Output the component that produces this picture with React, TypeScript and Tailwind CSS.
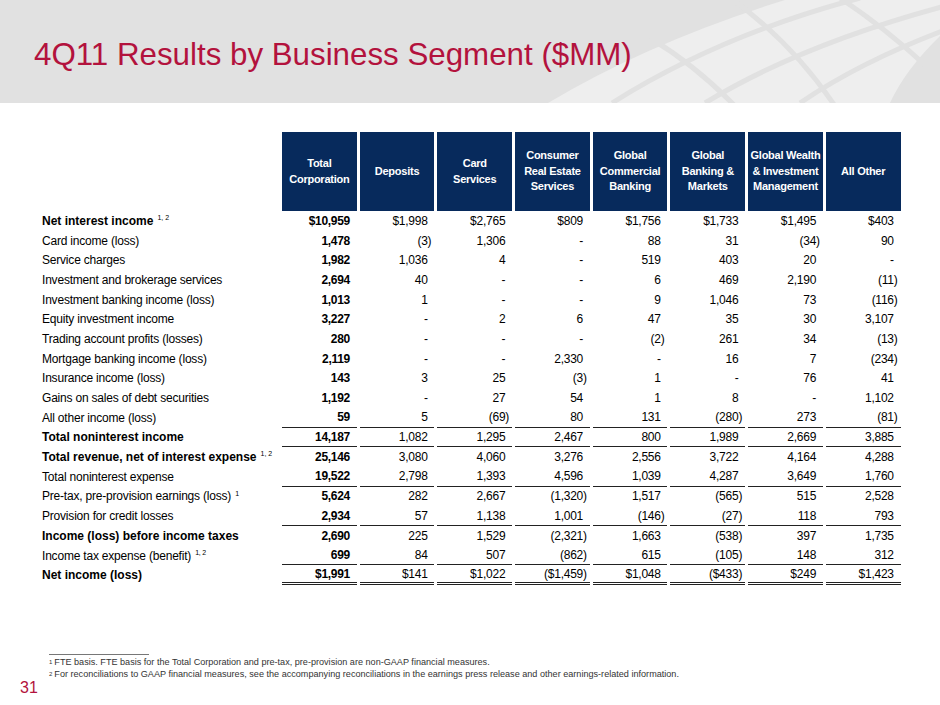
const columns = [
  ['Total', 'Corporation'],
  ['Deposits'],
  ['Card', 'Services'],
  ['Consumer', 'Real Estate', 'Services'],
  ['Global', 'Commercial', 'Banking'],
  ['Global', 'Banking &', 'Markets'],
  ['Global Wealth', '& Investment', 'Management'],
  ['All Other'],
];

type Row = {
  label: string;
  sup?: string;
  bold?: boolean;
  line?: 'single' | 'double';
  vals: string[];
};

const rows: Row[] = [
  { label: 'Net interest income', sup: '1, 2', bold: true, vals: ['$10,959', '$1,998', '$2,765', '$809', '$1,756', '$1,733', '$1,495', '$403'] },
  { label: 'Card income (loss)', vals: ['1,478', '(3)', '1,306', '-', '88', '31', '(34)', '90'] },
  { label: 'Service charges', vals: ['1,982', '1,036', '4', '-', '519', '403', '20', '-'] },
  { label: 'Investment and brokerage services', vals: ['2,694', '40', '-', '-', '6', '469', '2,190', '(11)'] },
  { label: 'Investment banking income (loss)', vals: ['1,013', '1', '-', '-', '9', '1,046', '73', '(116)'] },
  { label: 'Equity investment income', vals: ['3,227', '-', '2', '6', '47', '35', '30', '3,107'] },
  { label: 'Trading account profits (losses)', vals: ['280', '-', '-', '-', '(2)', '261', '34', '(13)'] },
  { label: 'Mortgage banking income (loss)', vals: ['2,119', '-', '-', '2,330', '-', '16', '7', '(234)'] },
  { label: 'Insurance income (loss)', vals: ['143', '3', '25', '(3)', '1', '-', '76', '41'] },
  { label: 'Gains on sales of debt securities', vals: ['1,192', '-', '27', '54', '1', '8', '-', '1,102'] },
  { label: 'All other income (loss)', line: 'single', vals: ['59', '5', '(69)', '80', '131', '(280)', '273', '(81)'] },
  { label: 'Total noninterest income', bold: true, line: 'single', vals: ['14,187', '1,082', '1,295', '2,467', '800', '1,989', '2,669', '3,885'] },
  { label: 'Total revenue, net of interest expense', sup: '1, 2', bold: true, vals: ['25,146', '3,080', '4,060', '3,276', '2,556', '3,722', '4,164', '4,288'] },
  { label: 'Total noninterest expense', line: 'single', vals: ['19,522', '2,798', '1,393', '4,596', '1,039', '4,287', '3,649', '1,760'] },
  { label: 'Pre-tax, pre-provision earnings (loss)', sup: '1', vals: ['5,624', '282', '2,667', '(1,320)', '1,517', '(565)', '515', '2,528'] },
  { label: 'Provision for credit losses', line: 'single', vals: ['2,934', '57', '1,138', '1,001', '(146)', '(27)', '118', '793'] },
  { label: 'Income (loss) before income taxes', bold: true, vals: ['2,690', '225', '1,529', '(2,321)', '1,663', '(538)', '397', '1,735'] },
  { label: 'Income tax expense (benefit)', sup: '1, 2', line: 'single', vals: ['699', '84', '507', '(862)', '615', '(105)', '148', '312'] },
  { label: 'Net income (loss)', bold: true, line: 'double', vals: ['$1,991', '$141', '$1,022', '($1,459)', '$1,048', '($433)', '$249', '$1,423'] },
];

function HeaderArcs() {
  return (
    <svg className="absolute inset-0" width="940" height="103" viewBox="0 0 940 103">
      <path d="M548 103 Q650 42 785 0 L940 0 L940 36 Q905 70 890 103 Z" fill="#eeeeee" />
      <g fill="none" stroke="#e1e1e1" strokeWidth="5">
        <path d="M612 103 Q720 35 860 -2" />
        <path d="M705 103 Q800 45 945 6" />
        <path d="M800 103 Q860 62 945 30" />
        <path d="M650 38 Q695 65 735 106" />
        <path d="M730 -2 Q790 40 835 106" />
        <path d="M840 -2 Q885 28 925 65" />
      </g>
    </svg>
  );
}

function Num({ v, bold }: { v: string; bold?: boolean }) {
  const paren = v.endsWith(')');
  return (
    <span className={bold ? 'font-bold tracking-[-0.3px]' : 'tracking-[-0.25px]'}>
      {v}
      {!paren && <span className="invisible">)</span>}
    </span>
  );
}

export default function App() {
  return (
    <div className="w-[940px] h-[705px] bg-white overflow-hidden font-['Liberation_Sans',Arial,sans-serif] text-black">
      <div className="relative h-[103px] bg-[#e1e1e1] overflow-hidden">
        <HeaderArcs />
        <h1 className="relative pl-[34px] pt-[39px] text-[31.3px] leading-[31px] text-[#b3123d]">
          4Q11 Results by Business Segment ($MM)
        </h1>
      </div>

      {/* Table */}
      <div className="pl-[42px] pt-[29px]">
        <div className="grid grid-cols-[237px_repeat(8,74.7px)] gap-x-[3px]">
          <div />
          {columns.map((lines, i) => (
            <div
              key={i}
              className="h-[79px] bg-[#072a5c] flex flex-col items-center justify-center text-center text-white font-bold text-[11px] leading-[15.5px] tracking-[-0.25px]"
            >
              {lines.map((l) => (
                <span key={l} className="whitespace-nowrap">
                  {l}
                </span>
              ))}
            </div>
          ))}

          {rows.map((r) => (
            <div key={r.label} className="contents">
              <div
                className={`h-[19.7px] flex items-center whitespace-nowrap text-[12px] ${r.bold ? 'font-bold' : 'tracking-[-0.2px]'}`}
              >
                {r.label}
                {r.sup && (
                  <span className="ml-[4px] text-[7px] font-normal self-start mt-[2px]">{r.sup}</span>
                )}
              </div>
              {r.vals.map((v, i) => (
                <div
                  key={i}
                  className={`h-[19.7px] flex items-center justify-end pr-[3px] text-[12px] ${
                    r.line === 'single'
                      ? 'border-b border-[#222]'
                      : r.line === 'double'
                        ? 'border-b-[3px] border-double border-[#222]'
                        : ''
                  }`}
                >
                  <Num v={v} bold={i === 0} />
                </div>
              ))}
            </div>
          ))}
        </div>
      </div>

      {/* Footnotes */}
      <div className="mt-[69px] pl-[49px] text-[9.1px] leading-[12px] text-[#333]">
        <div className="w-[100px] h-px bg-[#777] mb-px" />
        <p>
          <span className="text-[6px] align-top mr-[2px]">1</span>
          FTE basis. FTE basis for the Total Corporation and pre-tax, pre-provision are non-GAAP financial measures.
        </p>
        <p>
          <span className="text-[6px] align-top mr-[2px]">2</span>
          For reconciliations to GAAP financial measures, see the accompanying reconciliations in the earnings press release and other earnings-related information.
        </p>
      </div>
      <div className="pl-[20px] text-[16px] leading-[16px] text-[#b3123d]">31</div>
    </div>
  );
}
